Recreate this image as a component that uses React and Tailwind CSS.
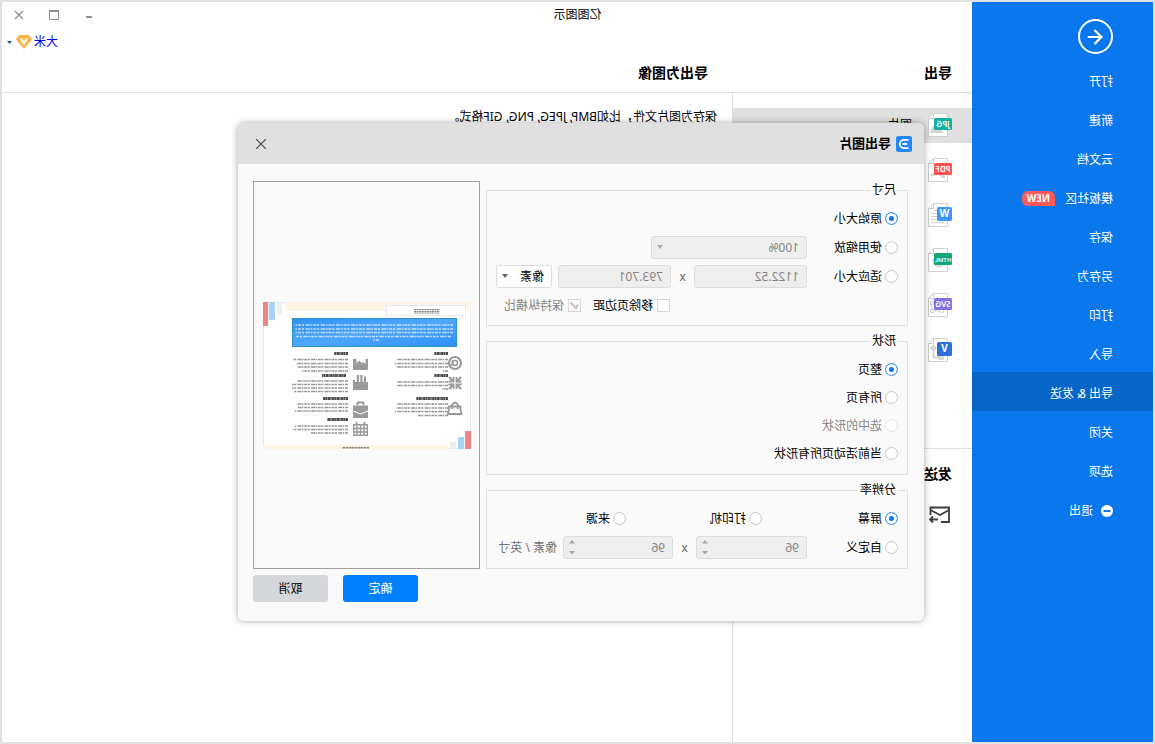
import { useState } from 'react';
import { ArrowLeft } from 'lucide-react';

const menuItems = ['打开', '新建', '云文档', '模板社区', '保存', '另存为', '打印', '导入', '导出 & 发送', '关闭', '选项', '退出'];

const exportTypes = [
  { tag: 'JPG', label: '图片', color: '#12b0a0', wide: true, art: <path d="M8 20l5-6 3 3 3-4 3 7zM12 7a2 2 0 1 0 .1 0" fill="#d4d4d4" /> },
  { tag: 'PDF', color: '#ff5252', wide: true, art: <path d="M8 19c2 0 4-4 6-4s4 2 6 2" fill="none" stroke="#d4d4d4" strokeWidth="3" strokeLinecap="round" /> },
  { tag: 'W', color: '#3f96fa', art: <path d="M8 7.500h9M8 10.500h13M8 13.500h13M8 16.500h13M8 19.500h12" stroke="#cfcfcf" /> },
  { tag: 'HTML', color: '#12a578', wide: true, art: <circle cx="13" cy="13" r="6" fill="#e2e2e2" stroke="#cfcfcf" /> },
  { tag: 'SVG', color: '#8370e4', wide: true, art: <path d="M8.500 16.500h3v3h-3zM18.500 16.500h3v3h-3zM11 18h7M8.500 8.500h3v3h-3zM18.500 8.500h3v3h-3zM10 11v6M20 11v6" fill="none" stroke="#cfcfcf" /> },
  { tag: 'V', color: '#2e70d8', art: <path d="M18.500 9.500v10h-7M18.500 7.500l2.500 2.500-2.500 2.500L16 10zM9 18h4v3H9z" fill="none" stroke="#cfcfcf" strokeWidth="1.500" /> }
];

function FileIcon({ tag, color, wide, art }) {
  return (
    <svg width="24" height="24" viewBox="0 0 24 24" aria-hidden="true">
      <path d="M4.500.5h14l5 5v18h-19z" fill="#fff" stroke="#cfcfcf" />
      <path d="M18.500.5v5h5" fill="none" stroke="#cfcfcf" />
      {art}
      <rect x="0" y={wide ? 5 : 4} width={wide ? 18 : 15} height={wide ? 12 : 14} rx="1.500" fill={color} />
      <text x={wide ? 9 : 7.5} y="14" textAnchor="middle" fill="#fff" fontSize={tag.length > 3 ? 6 : wide ? 8 : 10} fontWeight={wide ? 600 : 700}>{tag}</text>
    </svg>
  );
}

function MenuItem({ label, active }) {
  return (
    <li>
      <button type="button" className={`flex h-[39px] w-full items-center pt-1 pl-10 text-left ${active ? 'bg-[#0666c8]' : ''}`}>
        {label === '退出' && (
          <svg className="mr-2" width="12" height="12" viewBox="0 0 12 12" aria-hidden="true">
            <circle cx="6" cy="6" r="6" fill="#fff" />
            <path d="M2.500 6h7" stroke="#0a78ec" strokeWidth="2" />
          </svg>
        )}
        {label}
        {label === '模板社区' && <span className="ml-[10px] rounded-md rounded-bl-none bg-[#ff5a5a] px-[5px] text-[10px] leading-[15px] font-bold">NEW</span>}
      </button>
    </li>
  );
}

function Sidebar() {
  return (
    <nav className="w-[181px] shrink-0 bg-[#0a78ec] text-white">
      <div className="flex h-[58px] items-center pt-[11px] pl-10">
        <button type="button" aria-label="返回" className="flex size-[35px] items-center justify-center rounded-full border-2 border-white">
          <ArrowLeft size={22} strokeWidth={2.4} />
        </button>
      </div>
      <ul>
        {menuItems.map((label) => <MenuItem key={label} label={label} active={label === '导出 & 发送'} />)}
      </ul>
    </nav>
  );
}

function Header() {
  return (
    <header>
      <div className="flex h-[26px] items-center">
        <h1 className="flex-1 text-center">亿图图示</h1>
        <div className="flex w-[181px] justify-end text-[#8f8f8f]">
          <button type="button" aria-label="最小化" className="flex h-6 w-[35px] items-center justify-center">
            <svg width="10" height="10" viewBox="0 0 10 10"><path d="M2 7h6" stroke="currentColor" strokeWidth="2" /></svg>
          </button>
          <button type="button" aria-label="最大化" className="flex h-6 w-[35px] items-center justify-center">
            <svg width="10" height="10" viewBox="0 0 10 10"><path d="M.5 1v8.500h9V1" fill="none" stroke="currentColor" /><path d="M0 1h10" stroke="currentColor" strokeWidth="2" /></svg>
          </button>
          <button type="button" aria-label="关闭窗口" className="flex h-6 w-[35px] items-center justify-center">
            <svg width="10" height="10" viewBox="0 0 10 10"><path d="M1 1l8 8M9 1l-8 8" stroke="currentColor" strokeWidth="1.400" /></svg>
          </button>
        </div>
      </div>
      <div className="flex h-7 items-center justify-end pr-[5px]">
        <button type="button" className="flex items-center text-[#0000ff]">
          大米
          <svg className="ml-[2px]" width="16" height="14" viewBox="0 0 16 14" aria-hidden="true">
            <path d="M3 0h10l3 4.500L8 14 0 4.500z" fill="#f5b547" />
            <path d="M5 3.500l3 5 3-5" fill="none" stroke="#fff" strokeWidth="2" />
          </svg>
          <svg className="ml-1" width="5" height="3" viewBox="0 0 5 3" aria-hidden="true"><path d="M0 0h5L2.500 3z" fill="#0a5fb4" /></svg>
        </button>
      </div>
      <div className="flex h-[37px] items-center border-b border-[#e0e0e0] pb-[2px] text-sm font-bold">
        <h2 className="w-60 pl-5">导出</h2>
        <h2 className="pl-6">导出为图像</h2>
      </div>
    </header>
  );
}

function ExportNav() {
  return (
    <aside className="w-60 shrink-0 border-r border-[#e0e0e0]">
      <ul className="flex flex-col gap-[10px] pt-[15px] pb-20">
        {exportTypes.map((type) => (
          <li key={type.tag}>
            <button type="button" aria-label={type.label || type.tag} className={`flex h-[35px] w-full items-center gap-4 pb-px pl-5 text-left ${type.tag === 'JPG' ? 'bg-[#e0e0e0]' : ''}`}>
              <FileIcon {...type} />
              {type.label}
            </button>
          </li>
        ))}
      </ul>
      <h2 className="flex h-[50px] items-center border-t border-[#e0e0e0] pl-5 text-sm font-bold">发送</h2>
      <button type="button" aria-label="发送邮件" className="flex h-[35px] w-full items-center pb-px pl-[22px]">
        <svg width="21" height="18" viewBox="0 0 21 18" fill="none" stroke="#3c3c3c" strokeWidth="1.800" aria-hidden="true">
          <path d="M9 16H1V1.500h18.500V9" />
          <path d="M1 4l9 5 9.500-5M12 13.500h8M17 10.500l3 3-3 3" />
        </svg>
      </button>
    </aside>
  );
}

const radioClass = 'size-[13px] shrink-0 appearance-none rounded-full border border-[#c8c8c8] bg-white checked:border-[#4a9af5] checked:bg-[#0a78ec] checked:shadow-[inset_0_0_0_3px_white] disabled:border-[#e2e2e2]';

function Radio({ label, className = '', ...props }) {
  return (
    <label className={`flex items-center gap-[3px] ${props.disabled ? 'text-[#858585]' : ''} ${className}`}>
      <input type="radio" className={radioClass} {...props} />
      {label}
    </label>
  );
}

function Check({ label, disabled, ...props }) {
  return (
    <label className={`relative flex items-center gap-1 ${disabled ? 'text-[#858585]' : ''}`}>
      <input type="checkbox" disabled={disabled} className="peer size-[13px] appearance-none border border-[#d8d8dc] bg-white disabled:bg-[#fafafa]" {...props} />
      <svg className="pointer-events-none absolute left-0 hidden peer-checked:block" width="13" height="13" viewBox="0 0 13 13" aria-hidden="true">
        <path d="M3 5.500l2 3.500 5.500-5.500" fill="none" stroke="#c4c4c4" strokeWidth="2" />
      </svg>
      {label}
    </label>
  );
}

const fieldClass = 'h-[23px] w-full appearance-none rounded-[3px] border border-[#dcdce0] bg-white pl-[7px] disabled:bg-[#eeeeee] disabled:text-[#858585] disabled:opacity-100';

function Select({ label, options, className, ...props }) {
  return (
    <div className={`relative ${className}`}>
      <select aria-label={label} className={fieldClass} {...props}>
        {options.map((option) => <option key={option}>{option}</option>)}
      </select>
      <svg className={`pointer-events-none absolute top-[9px] right-[6px] ${props.disabled ? 'text-[#aaaaaa]' : 'text-[#6a6a6a]'}`} width="6" height="4" viewBox="0 0 6 4" aria-hidden="true">
        <path d="M0 0h6L3 4z" fill="currentColor" />
      </svg>
    </div>
  );
}

function Spinner({ label, value, className }) {
  return (
    <div className={`relative ${className}`}>
      <input aria-label={label} className={fieldClass} value={value} disabled readOnly />
      <svg className="pointer-events-none absolute top-1 right-[6px]" width="6" height="15" viewBox="0 0 6 15" fill="#a6a6a6" aria-hidden="true">
        <path d="M0 3.500h6L3 0zM0 11h6l-3 3.500z" />
      </svg>
    </div>
  );
}

function Group({ title, className = '', children }) {
  return (
    <fieldset className={`flex flex-col rounded-none border border-[#e0e0e0] px-[9px] pt-2 ${className}`}>
      <legend className="h-[18px] px-[2px] leading-[18px]">{title}</legend>
      {children}
    </fieldset>
  );
}

function TextLines({ x, rows }) {
  return rows.map(([y, w]) => (
    <path key={y} d={`M${x} ${y}h${w}`} stroke="#4f4f58" strokeOpacity=".6" strokeWidth="1.500" strokeDasharray="3 .8 1.500 .5 4 1.200 2 .6" />
  ));
}

function Heading({ x, y, w }) {
  return <path d={`M${x} ${y}h${w}`} stroke="#2c2c2c" strokeWidth="3" strokeDasharray="2.400 .4 1.400 .3" strokeOpacity=".85" />;
}

function PagePreview() {
  return (
    <svg width="208" height="147" viewBox="0 0 208 147" role="img" aria-label="页面预览">
      <defs>
        <linearGradient id="banner" x1="0" y1="1" x2="1" y2="0">
          <stop offset="0" stopColor="#2b90fb" />
          <stop offset=".5" stopColor="#4fa6fb" />
          <stop offset="1" stopColor="#2f92fb" />
        </linearGradient>
      </defs>
      <rect x=".5" y=".5" width="207" height="146" fill="#fff" stroke="#e6e8ee" />
      <path d="M0 0h186v9H0zM23 143h185v4H23z" fill="#fff3e6" />
      <path d="M203 0h5v24h-5zM0 129h6v18H0z" fill="#ec8585" />
      <path d="M196 0h6v18h-6zM7 135h6v12H7z" fill="#a9d3f6" />
      <path d="M189 0h5v13h-5zM15 140h6v7h-6z" fill="#ededf0" />
      <rect x="5.500" y="3.500" width="79" height="10" fill="#fff" stroke="#e6e8f2" />
      <path d="M32 7.500h25M32 9.300h25M32 11h25" stroke="#555" strokeWidth="1.200" strokeDasharray="2 .6 1.800 .7" strokeOpacity=".75" />
      <rect x="14.500" y="16.500" width="164" height="28" fill="url(#banner)" stroke="#2d94c4" />
      <g stroke="#fff" strokeWidth="1.500" strokeOpacity=".65" strokeDasharray="3 .9 1.600 .8 4.500 1.400 2.200 .8">
        <path d="M18 23h158M18 27h158M18 30.500h158M20 34.500h156M92 38h6" />
      </g>

      <Heading x={23} y={51.5} w={14} />
      <TextLines x={23} rows={[[57.5, 51], [61.5, 53], [65, 52], [69, 5]]} />
      <Heading x={23} y={73.5} w={14} />
      <TextLines x={23} rows={[[80, 52], [83.5, 51], [87, 6]]} />
      <Heading x={23} y={96.5} w={32} />
      <TextLines x={23} rows={[[102, 52], [106, 52], [109.5, 53], [113.5, 30]]} />
      <Heading x={123} y={51.5} w={14} />
      <TextLines x={123} rows={[[57.5, 55], [61.5, 52], [65, 50], [69, 46]]} />
      <Heading x={125} y={73.5} w={24} />
      <TextLines x={123} rows={[[79, 51], [82.5, 56], [86, 56], [89.5, 54]]} />
      <Heading x={123} y={96.5} w={25} />
      <TextLines x={123} rows={[[102, 52], [105.5, 50], [109, 53]]} />
      <Heading x={123} y={117.5} w={21} />
      <TextLines x={123} rows={[[124, 53], [127.5, 55], [131, 38]]} />
      <path d="M102 145.800h27" stroke="#8a8079" strokeWidth="1.500" strokeDasharray="2.400 .6" />

      <g fill="none" stroke="#9a9a9a" strokeWidth="2.200">
        <circle cx="16" cy="61" r="6" />
        <circle cx="16" cy="61" r="2.500" strokeWidth="1.600" />
        <path d="M18.500 58v4.500l3 1" strokeWidth="1.600" />
        <path d="M10 75l4 4M22 75l-4 4M10 87l4-4M22 87l-4-4" />
        <path d="M14.500 75v4.500h-5M17.500 75v4.500h5M14.500 87v-4.500h-5M17.500 87v-4.500h5" strokeWidth="1.800" />
        <path d="M10.500 104.500h11.500v3l1 4.500H9.500l1-4.500zM13 107v-4q3-5 6 0v4" strokeWidth="1.800" />
        <path d="M107.500 103v-2.500h6v2.500" strokeWidth="1.800" />
        <path d="M103.700 122.700h13.600v10.600h-13.600zM103 126.500h15M103 130h15M107 123v10M110.500 123v10M114 123v10" strokeWidth="1.400" />
        <path d="M106.500 120v3M114.500 120v3" strokeWidth="1.800" />
      </g>
      <g fill="#9a9a9a">
        <path d="M103 68V57h2.500v5l3-2.500v2l3.500-3 2.500 3V57h3.500v11z" />
        <path d="M103 88v-8h2v-5.500h2.200V80h1.300v-7h2.200v7h1.300v-7h2.200v7H116v-2h2v10z" />
        <path d="M103 103.500h15v5l-7.500 3-7.500-3zM103 109.500l7.500 3 7.500-3v6.500h-15z" />
      </g>
    </svg>
  );
}

function ExportDialog() {
  const [size, setSize] = useState('original');
  const [shape, setShape] = useState('page');
  const [dpi, setDpi] = useState('screen');

  return (
    <div role="dialog" aria-label="导出图片" className="w-[686px] overflow-hidden rounded-md bg-[#fafafa] shadow-[0_0_7px_rgba(0,0,0,0.35)]">
      <div className="flex h-[41px] items-center bg-[#e0e0e0] pr-[18px] pl-3">
        <svg width="16" height="16" viewBox="0 0 16 16" aria-hidden="true">
          <rect width="16" height="16" rx="2.500" fill="#2288fb" />
          <path d="M3.500 3.800H8a4.200 4.200 0 0 1 0 8.400H3.500M5 8h4.500" fill="none" stroke="#fff" strokeWidth="1.800" />
        </svg>
        <h2 className="ml-[5px] flex-1 text-[13px] font-bold">导出图片</h2>
        <button type="button" aria-label="关闭">
          <svg width="10" height="10" viewBox="0 0 10 10"><path d="M0 0l10 10M10 0L0 10" stroke="#444" strokeWidth="1.200" /></svg>
        </button>
      </div>

      <form className="pt-[17px] pr-[15px] pb-[19px] pl-4" onSubmit={(e) => e.preventDefault()}>
        <div className="flex gap-[6px]">
          <div className="flex flex-1 flex-col gap-[6px]">
            <Group title="尺寸" className="gap-[6px] pb-2">
              <Radio name="size" label="原始大小" className="h-[23px]" checked={size === 'original'} onChange={() => setSize('original')} />
              <div className="flex items-center">
                <Radio name="size" label="使用缩放" className="w-[91px]" checked={size === 'scale'} onChange={() => setSize('scale')} />
                <Select label="缩放比例" options={['100%']} className="w-[156px]" disabled />
              </div>
              <div className="flex items-center">
                <Radio name="size" label="适应大小" className="w-[91px]" checked={size === 'fit'} onChange={() => setSize('fit')} />
                <div className="w-[113px]"><input aria-label="宽度" className={fieldClass} value="1122.52" disabled readOnly /></div>
                <span className="w-[23px] text-center text-[#666]">x</span>
                <div className="w-[113px]"><input aria-label="高度" className={fieldClass} value="793.701" disabled readOnly /></div>
                <Select label="单位" options={['像素', '英寸', '毫米']} className="ml-[6px] w-14" />
              </div>
              <div className="flex h-[23px] items-center gap-3 pl-[228px]">
                <Check label="移除页边距" />
                <Check label="保持纵横比" disabled defaultChecked />
              </div>
            </Group>

            <Group title="形状" className="gap-[5px] pb-[9px]">
              <Radio name="shape" label="整页" className="h-[23px]" checked={shape === 'page'} onChange={() => setShape('page')} />
              <Radio name="shape" label="所有页" className="h-[23px]" checked={shape === 'all'} onChange={() => setShape('all')} />
              <Radio name="shape" label="选中的形状" className="h-[23px]" disabled />
              <Radio name="shape" label="当前活动页所有形状" className="h-[23px]" checked={shape === 'active'} onChange={() => setShape('active')} />
            </Group>

            <Group title="分辨率" className="gap-[6px] pb-[9px]">
              <div className="flex h-[23px] items-center">
                <Radio name="dpi" label="屏幕" className="w-[136px]" checked={dpi === 'screen'} onChange={() => setDpi('screen')} />
                <Radio name="dpi" label="打印机" className="w-[136px]" checked={dpi === 'printer'} onChange={() => setDpi('printer')} />
                <Radio name="dpi" label="来源" checked={dpi === 'source'} onChange={() => setDpi('source')} />
              </div>
              <div className="flex items-center">
                <Radio name="dpi" label="自定义" className="w-[91px]" checked={dpi === 'custom'} onChange={() => setDpi('custom')} />
                <Spinner label="水平分辨率" value="96" className="w-[111px]" />
                <span className="w-[23px] text-center text-[#666]">x</span>
                <Spinner label="垂直分辨率" value="96" className="w-[110px]" />
                <span className="ml-[6px] whitespace-nowrap text-[#757575]">像素 / 英寸</span>
              </div>
            </Group>
          </div>

          <div className="flex w-[227px] shrink-0 items-center border border-[#a0a0a0] pl-2">
            <PagePreview />
          </div>
        </div>

        <div className="mt-[6px] flex justify-end gap-[15px]">
          <button type="submit" className="h-[27px] w-[75px] rounded-[3px] bg-[#0080ff] text-white">确定</button>
          <button type="button" className="h-[27px] w-[75px] rounded-[3px] bg-[#d5d7db]">取消</button>
        </div>
      </form>
    </div>
  );
}

export default function App() {
  return (
    <div className="relative flex min-h-screen -scale-x-100 border-2 border-[#e0e0e0] bg-white font-['Noto_Sans','Noto_Sans_CJK_SC',sans-serif] text-xs text-black">
      <Sidebar />
      <div className="flex min-w-0 flex-1 flex-col">
        <Header />
        <div className="flex flex-1">
          <ExportNav />
          <main className="flex-1 px-[15px] pt-4">
            <p>保存为图片文件，比如BMP, JPEG, PNG, GIF格式。</p>
          </main>
        </div>
      </div>
      <div className="absolute inset-0 flex items-center justify-center pr-[7px]">
        <ExportDialog />
      </div>
    </div>
  );
}
